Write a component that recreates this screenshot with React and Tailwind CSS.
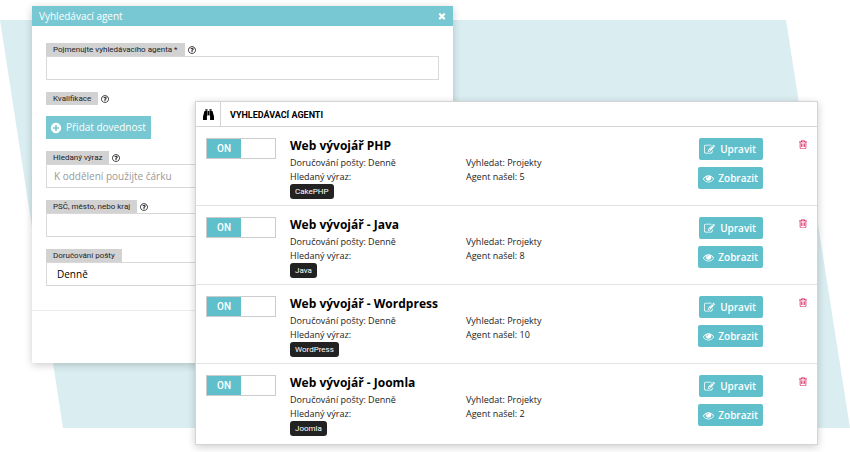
import { useState } from 'react';
import { FaRegQuestionCircle } from 'react-icons/fa';

const agents = [
  { id: 1, name: 'Web vývojář PHP', found: 5, tag: 'CakePHP' },
  { id: 2, name: 'Web vývojář - Java', found: 8, tag: 'Java' },
  { id: 3, name: 'Web vývojář - Wordpress', found: 10, tag: 'WordPress' },
  { id: 4, name: 'Web vývojář - Joomla', found: 2, tag: 'Joomla' },
];

function Icon({ d, className, viewBox = '0 0 1792 1792' }) {
  return (
    <svg viewBox={viewBox} fill="currentColor" className={className} aria-hidden="true">
      <path d={d} />
    </svg>
  );
}

const plusPath = 'M1344 960v-128q0-26-19-45t-45-19h-256v-256q0-26-19-45t-45-19h-128q-26 0-45 19t-19 45v256h-256q-26 0-45 19t-19 45v128q0 26 19 45t45 19h256v256q0 26 19 45t45 19h128q26 0 45-19t19-45v-256h256q26 0 45-19t19-45zm320-64q0 209-103 385.500t-279.500 279.500-385.500 103-385.500-103-279.500-279.500-103-385.500 103-385.500 279.500-279.500 385.500-103 385.500 103 279.500 279.500 103 385.500z';
const editPath = 'M888 1184l116-116-152-152-116 116v56h96v96h56zm440-720q-16-16-33 1l-350 350q-17 17-1 33t33-1l350-350q17-17 1-33zm80 594v190q0 119-84.500 203.500t-203.500 84.500h-832q-119 0-203.500-84.500t-84.500-203.500v-832q0-119 84.500-203.500t203.500-84.500h832q63 0 117 25 15 7 18 23 3 17-9 29l-49 49q-14 14-32 8-23-6-45-6h-832q-66 0-113 47t-47 113v832q0 66 47 113t113 47h832q66 0 113-47t47-113v-126q0-13 9-22l64-64q15-15 35-7t20 29zm-96-738l288 288-672 672h-288v-288zm444 132l-92 92-288-288 92-92q28-28 68-28t68 28l152 152q28 28 28 68t-28 68z';
const eyePath = 'M1664 960q-152-236-381-353 61 104 61 225 0 185-131.500 316.500t-316.500 131.500-316.500-131.500-131.500-316.500q0-121 61-225-229 117-381 353 133 205 333.500 326.500t434.500 121.500 434.500-121.500 333.500-326.500zm-720-384q0-20-14-34t-34-14q-125 0-214.500 89.500t-89.500 214.500q0 20 14 34t34 14 34-14 14-34q0-86 61-147t147-61q20 0 34-14t14-34zm848 384q0 34-20 69-140 230-376.500 368.500t-499.500 138.500-499.500-139-376.500-368q-20-35-20-69t20-69q140-229 376.500-368t499.500-139 499.500 139 376.500 368q20 35 20 69z';
const trashPath = 'M704 736v576q0 14-9 23t-23 9h-64q-14 0-23-9t-9-23v-576q0-14 9-23t23-9h64q14 0 23 9t9 23zm256 0v576q0 14-9 23t-23 9h-64q-14 0-23-9t-9-23v-576q0-14 9-23t23-9h64q14 0 23 9t9 23zm256 0v576q0 14-9 23t-23 9h-64q-14 0-23-9t-9-23v-576q0-14 9-23t23-9h64q14 0 23 9t9 23zm128 724v-948h-896v948q0 22 7 40.500t14.500 27 10.500 8.500h832q3 0 10.500-8.500t14.500-27 7-40.500zm-672-1076h448l-48-117q-7-9-17-11h-317q-10 2-17 11zm928 32v64q0 14-9 23t-23 9h-96v948q0 83-47 143.500t-113 60.500h-832q-66 0-113-58.500t-47-141.500v-952h-96q-14 0-23-9t-9-23v-64q0-14 9-23t23-9h309l70-167q15-37 54-63t79-26h320q40 0 79 26t54 63l70 167h309q14 0 23 9t9 23z';
const closePath = 'M1490 1322q0 40-28 68l-136 136q-28 28-68 28t-68-28l-294-294-294 294q-28 28-68 28t-68-28l-136-136q-28-28-28-68t28-68l294-294-294-294q-28-28-28-68t28-68l136-136q28-28 68-28t68 28l294 294 294-294q28-28 68-28t68 28l136 136q28 28 28 68t-28 68l-294 294 294 294q28 28 28 68z';
const binocularsPath = 'M704 320v768q0 26-19 45t-45 19v576q0 26-19 45t-45 19h-512q-26 0-45-19t-19-45v-512l249-873q7-23 31-23h424zm320 0v704h-256v-704h256zm768 896v512q0 26-19 45t-45 19h-512q-26 0-45-19t-19-45v-576q-26 0-45-19t-19-45v-768h424q24 0 31 23zm-1056-1152v224h-352v-224q0-14 9-23t23-9h288q14 0 23 9t9 23zm672 0v224h-352v-224q0-14 9-23t23-9h288q14 0 23 9t9 23z';

function FieldLabel({ htmlFor, children, help = true }) {
  return (
    <div className="flex items-center gap-[3px]">
      <label htmlFor={htmlFor} className="bg-[#d2d2d2] px-[7px] font-[Roboto,sans-serif] text-[8px] leading-[13px] text-[#222]">{children}</label>
      {help && (
        <button type="button" aria-label="Nápověda">
          <FaRegQuestionCircle className="size-2 text-[#222]" />
        </button>
      )}
    </div>
  );
}

function AgentRow({ agent }) {
  const [on, setOn] = useState(true);

  return (
    <li className="flex items-start border-b border-[#e2e2e2] px-2.5 pt-[9px] pb-[6px] last:border-b-0 last:pb-2">
      <label className="relative mt-[2px] flex h-[21px] w-[70px] shrink-0 border border-[#ccc] bg-white font-[Roboto,sans-serif] text-[10px] leading-[19px] font-medium text-white">
        <input
          type="checkbox"
          className="peer sr-only"
          checked={on}
          onChange={(e) => setOn(e.target.checked)}
          aria-label={agent.name}
        />
        <span className={on ? 'w-1/2 bg-[#5fc0cc] text-center' : 'ml-auto w-1/2 bg-gray-300 text-center'}>{on ? 'ON' : 'OFF'}</span>
      </label>
      <div className="ml-3.5 min-w-0 flex-1">
        <h3 className="text-[12px] leading-5 font-bold text-black">{agent.name}</h3>
        <div className="grid grid-cols-[176px_1fr] text-[9px] leading-[14px] text-[#222]">
          <p>Doručování pošty: Denně</p>
          <p>Vyhledat: Projekty</p>
          <p>Hledaný výraz:</p>
          <p>Agent našel: {agent.found}</p>
        </div>
        <span className="block w-fit rounded-[3px] bg-[#222] px-[5px] font-[Roboto,sans-serif] text-[8px] leading-[15px] text-white">{agent.tag}</span>
      </div>
      <div className="mt-[2px] flex shrink-0 flex-col items-end gap-[7px]">
        <button type="button" className="flex h-[22px] items-center gap-[5px] rounded-xs bg-[#5fc0cc] pr-[7px] pl-[5px] text-[10px] font-semibold text-white">
          <Icon d={editPath} className="size-[11px]" />
          Upravit
        </button>
        <button type="button" className="flex h-[22px] items-center gap-1 rounded-xs bg-[#5fc0cc] px-[5px] text-[10px] font-semibold text-white">
          <Icon d={eyePath} className="size-[11px]" />
          Zobrazit
        </button>
      </div>
      <button type="button" className="mt-1 ml-9 shrink-0" aria-label="Smazat">
        <Icon d={trashPath} viewBox="192 128 1408 1536" className="h-[9px] w-2 text-[#d81b56]" />
      </button>
    </li>
  );
}

export default function App() {
  return (
    <div className="relative isolate grid bg-white pb-2 font-['Open_Sans',sans-serif]">
      <svg
        viewBox="0 0 850 452"
        preserveAspectRatio="none"
        className="absolute inset-0 -z-10 h-full w-full"
        aria-hidden="true"
      >
        <polygon points="0,20 786,20 850,427 63,427" fill="#daeef1" />
      </svg>

      {/* Agent form */}
      <section className="col-start-1 row-start-1 mt-1.5 ml-8 w-full max-w-[421px] self-start bg-white shadow-[0_2px_8px_rgba(0,0,0,0.2)]">
        <header className="flex h-5 items-center justify-between bg-[#77c8d2] pr-[6px] pl-[7px] text-white">
          <h2 className="text-[10px]">Vyhledávací agent</h2>
          <button type="button" aria-label="Zavřít">
            <Icon d={closePath} className="size-[10px]" />
          </button>
        </header>
        <form className="flex flex-col gap-3 px-3.5 pt-[17px] pb-6" onSubmit={(e) => e.preventDefault()}>
          <div>
            <FieldLabel htmlFor="agent-name">Pojmenujte vyhledávacího agenta *</FieldLabel>
            <input id="agent-name" type="text" className="block h-6 w-full border border-[#d8d8d8] bg-white px-[7px] text-[10px]" />
          </div>
          <div>
            <FieldLabel htmlFor="agent-skill">Kvalifikace</FieldLabel>
            <button id="agent-skill" type="button" className="mt-[11px] flex h-[23px] items-center gap-1 bg-[#77c8d2] pr-[5px] pl-1 text-[10px] text-white">
              <Icon d={plusPath} className="size-3" />
              Přidat dovednost
            </button>
          </div>
          <div>
            <FieldLabel htmlFor="agent-term">Hledaný výraz</FieldLabel>
            <input id="agent-term" type="text" placeholder="K oddělení použijte čárku" className="block h-6 w-full border border-[#d8d8d8] bg-white px-[7px] text-[10px] placeholder:text-[#999]" />
          </div>
          <div>
            <FieldLabel htmlFor="agent-place">PSČ, město, nebo kraj</FieldLabel>
            <input id="agent-place" type="text" className="block h-6 w-full border border-[#d8d8d8] bg-white px-[7px] text-[10px]" />
          </div>
          <div>
            <FieldLabel htmlFor="agent-delivery" help={false}>Doručování pošty</FieldLabel>
            <select id="agent-delivery" className="block h-6 w-full appearance-none border border-[#d8d8d8] bg-white px-2.5 text-[10px] text-black">
              <option>Denně</option>
              <option>Týdně</option>
            </select>
          </div>
        </form>
        <footer className="h-[53px] border-t border-[#ececec]" />
      </section>

      {/* Agent list */}
      <section className="col-start-1 row-start-1 mt-[101px] mr-8 ml-[195px] self-start border border-[#d4d4d4] bg-white shadow-[0_2px_8px_rgba(0,0,0,0.2)]">
        <header className="flex h-[25px] items-stretch border-b border-[#d4d4d4]">
          <span className="flex w-[25px] items-center justify-center border-r border-[#d4d4d4]">
            <Icon d={binocularsPath} className="size-[11px] text-black" />
          </span>
          <h2 className="pl-[9px] font-[Roboto,sans-serif] text-[9px] leading-[26px] font-bold text-black">VYHLEDÁVACÍ AGENTI</h2>
        </header>
        <ul>
          {agents.map((a) => <AgentRow key={a.id} agent={a} />)}
        </ul>
      </section>
    </div>
  );
}
